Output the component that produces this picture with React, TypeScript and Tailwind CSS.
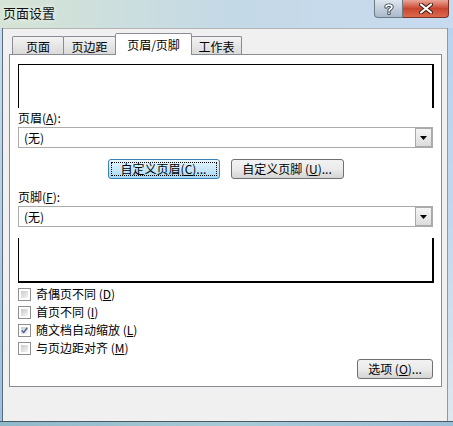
import React from 'react';

const font = { fontFamily: '"Noto Sans CJK SC", "Liberation Sans", sans-serif' };

function Tab({ label, active, width, first }: { label: string; active?: boolean; width: string; first?: boolean }) {
  if (active) {
    return (
      <div
        className={`${width} h-[22px] -ml-px -mb-px relative z-10 flex items-center justify-center border border-b-0 border-[#898c95] bg-white rounded-t-[2px] text-[12px] text-black`}
      >
        {label}
      </div>
    );
  }
  return (
    <div
      className={`${width} h-[18px] ${first ? '' : '-ml-px'} flex items-center justify-center border border-b-0 border-[#898c95] bg-gradient-to-b from-[#f3f3f3] to-[#dadada] rounded-t-[2px] text-[12px] text-black pt-[2px]`}
    >
      {label}
    </div>
  );
}

function Select() {
  return (
    <div className="w-[415px] h-[21px] border border-[#ababab] bg-white flex items-center justify-between">
      <span className="pl-[5px] text-[12px] text-black">(无)</span>
      <div className="w-[17px] h-[19px] border border-[#a9a9a9] bg-gradient-to-b from-[#f5f5f5] to-[#dcdcdc] flex items-center justify-center">
        <svg width="7" height="4" viewBox="0 0 7 4">
          <path d="M0 0H7L3.5 4Z" fill="#000" />
        </svg>
      </div>
    </div>
  );
}

function Button({ children, width, focused }: { children: React.ReactNode; width: string; focused?: boolean }) {
  if (focused) {
    return (
      <div className={`${width} h-[20px] rounded-[3px] border border-[#3c7fb1] bg-gradient-to-b from-[#eaf6fd] to-[#a7d9f5] p-[2px]`}>
        <div className="w-full h-full border border-dotted border-black flex items-center justify-center text-[12px] text-black">
          {children}
        </div>
      </div>
    );
  }
  return (
    <div className={`${width} h-[20px] rounded-[3px] border border-[#707070] bg-gradient-to-b from-[#f2f2f2] via-[#ebebeb] to-[#d4d4d4] flex items-center justify-center text-[12px] text-black`}>
      {children}
    </div>
  );
}

function Check({ label, k, checked }: { label: string; k: string; checked?: boolean }) {
  return (
    <div className="h-[18px] flex items-center gap-[5px]">
      <div className="w-[13px] h-[13px] border border-[#8e8f8f] bg-white p-[2px]">
        <div className="w-full h-full bg-gradient-to-br from-[#cbcbcb] to-[#f4f4f4] flex items-center justify-center">
          {checked && (
            <svg width="9" height="9" viewBox="0 0 9 9">
              <path d="M1 4.5L3.5 7L8 1" stroke="#4a5f97" strokeWidth="1.8" fill="none" />
            </svg>
          )}
        </div>
      </div>
      <span className="text-[12px] text-black">
        {label} (<span className="underline">{k}</span>)
      </span>
    </div>
  );
}

export default function App() {
  return (
    <div className="w-[453px] h-[426px] flex flex-col overflow-hidden" style={font}>
      {/* title bar */}
      <div className="h-[28px] flex justify-between bg-gradient-to-r from-[#d5e4d4] via-[#c4d9e6] to-[#c7daf0]">
        <div className="pl-[3px] pt-[6px] text-[13px] text-[#111] leading-none [text-shadow:0_0_6px_#fff]">页面设置</div>
        <div className="flex h-[18px] mr-[4px]">
          <div className="w-[29px] h-[18px] rounded-bl-[4px] border border-t-0 border-[#6d7a88] bg-gradient-to-b from-[#dfe6ee] via-[#c3cfdc] to-[#a9b9cb] flex items-center justify-center">
            <svg width="10" height="12" viewBox="0 0 10 12">
              <path d="M2 4C2 1.5 8 1.5 8 4C8 6 5 6 5 8M5 10V10.5" stroke="#3a4550" strokeWidth="3.4" fill="none" strokeLinecap="round" />
              <path d="M2 4C2 1.5 8 1.5 8 4C8 6 5 6 5 8M5 10V10.5" stroke="#fff" strokeWidth="1.6" fill="none" strokeLinecap="round" />
            </svg>
          </div>
          <div className="w-[46px] h-[18px] rounded-br-[4px] border border-t-0 border-l-0 border-[#7a3126] bg-gradient-to-b from-[#e9a597] via-[#c9452f] to-[#dc6a4c] flex items-center justify-center">
            <svg width="14" height="11" viewBox="0 0 14 11">
              <path d="M2 1.5L12 9.5M12 1.5L2 9.5" stroke="#3b1a14" strokeWidth="4" strokeLinecap="round" />
              <path d="M2 1.5L12 9.5M12 1.5L2 9.5" stroke="#fff" strokeWidth="2.2" strokeLinecap="round" />
            </svg>
          </div>
        </div>
      </div>

      <div className="flex flex-1">
        <div className="w-[3px] bg-gradient-to-b from-[#c9dcee] to-[#9cbfe0] border-r border-[#5c6b7a]" />
        {/* client */}
        <div className="w-[444px] bg-[#f0f0f0] border-t border-[#b5b5b5] pt-[4px] pl-[6px]">
          <div className="flex items-end h-[21px] pl-[3px]">
            <Tab label="页面" width="w-[52px]" first />
            <Tab label="页边距" width="w-[53px]" />
            <Tab label="页眉/页脚" width="w-[77px]" active />
            <Tab label="工作表" width="w-[51px]" />
          </div>
          <div className="w-[433px] h-[333px] border border-[#898c95] bg-white pl-[8px] pt-[9px] flex flex-col">
            <div className="w-[416px] h-[44px] border-t border-l border-r-2 border-black" />
            <div className="h-[19px] flex items-center text-[12px] text-black pt-[1px]">
              页眉(<span className="underline">A</span>):
            </div>
            <Select />
            <div className="flex justify-center gap-[11px] mt-[11px] pr-[8px]">
              <Button width="w-[112px]" focused>
                自定义页眉(<span className="underline">C</span>)...
              </Button>
              <Button width="w-[113px]">
                自定义页脚 (<span className="underline">U</span>)...
              </Button>
            </div>
            <div className="h-[19px] mt-[8px] flex items-center text-[12px] text-black">
              页脚(<span className="underline">F</span>):
            </div>
            <Select />
            <div className="w-[416px] h-[45px] mt-[11px] border-l border-b-2 border-r-2 border-black" />
            <div className="mt-[2px] flex flex-col">
              <Check label="奇偶页不同" k="D" />
              <Check label="首页不同" k="I" />
              <Check label="随文档自动缩放" k="L" checked />
              <Check label="与页边距对齐" k="M" />
            </div>
            <div className="flex justify-end pr-[8px] mt-[2px]">
              <Button width="w-[76px]">
                选项 (<span className="underline">O</span>)...
              </Button>
            </div>
          </div>
        </div>
        <div className="w-[6px] bg-gradient-to-b from-[#b9d3ee] via-[#c3d8ee] to-[#dfe7ee] border-l border-[#8a9aab]" />
      </div>
      <div className="h-[5px] border-t border-[#4a5866] bg-gradient-to-r from-[#8fb8c8] via-[#a7cbd6] to-[#9cc0d8]" />
    </div>
  );
}
